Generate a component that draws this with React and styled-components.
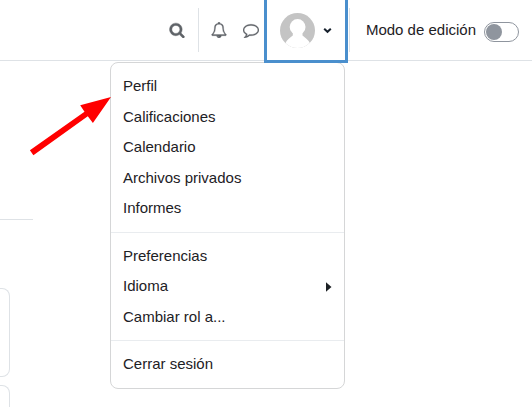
import React from 'react';
import styled, { createGlobalStyle } from 'styled-components';

const GlobalStyle = createGlobalStyle`
  * { box-sizing: border-box; }
  body {
    margin: 0;
    background: #fff;
    color: #1d2125;
    font: 15px/22.5px "Liberation Sans", Arial, sans-serif;
    overflow: hidden;
  }
`;

const Page = styled.div`
  position: relative;
  width: 532px;
  height: 407px;
  overflow: hidden;
`;

const Navbar = styled.header`
  display: flex;
  align-items: flex-start;
  justify-content: flex-end;
  height: 61px;
  padding-right: 13px;
  border-bottom: 1px solid #dee2e6;
`;

const NavIcon = styled.svg`
  flex: none;
  width: 16px;
  height: 16px;
  margin: 22px ${(p) => p.$after}px 0 0;
  fill: #5f6368;
  stroke: #5f6368;
  stroke-width: ${(p) => p.$weight || 36};
`;

const Divider = styled.div`
  flex: none;
  width: 1px;
  height: 44px;
  margin: 8px ${(p) => p.$after}px 0 0;
  background: #dee2e6;
`;

const UserButton = styled.button`
  flex: none;
  display: flex;
  align-items: flex-start;
  width: 84px;
  height: 63px;
  margin: 0 1px 0 0;
  padding: 13px 0 0 13px;
  border: solid #4a8fcd;
  border-width: 0 3px 3px;
  background: #fff;
  position: relative;
  z-index: 1;
`;

const Avatar = styled.svg`
  flex: none;
  width: 35px;
  height: 35px;
`;

const Chevron = styled.svg`
  flex: none;
  width: 9px;
  height: 7px;
  margin: 14px 0 0 7.500px;
`;

const EditMode = styled.label`
  display: flex;
  align-items: flex-start;
  gap: 8px;
  padding-top: 19px;
  white-space: nowrap;
`;

const Switch = styled.span`
  width: 35px;
  height: 20px;
  margin-top: 3px;
  padding: 1px;
  border: 1px solid #8f959e;
  border-radius: 10px;
`;

const Knob = styled.span`
  display: block;
  width: 16px;
  height: 16px;
  border-radius: 50%;
  background: #8f959e;
`;

const Sidebar = styled.aside`
  width: 33px;
  padding-top: 158px;
`;

const SideRule = styled.div`
  height: 1px;
  background: #dee2e6;
`;

const SideCard = styled.div`
  width: 10px;
  height: 89px;
  margin-top: ${(p) => p.$gap}px;
  border: 1px solid #dee2e6;
  border-left: 0;
  border-radius: 0 8px 8px 0;
`;

const Menu = styled.nav`
  position: absolute;
  left: 110px;
  top: 62px;
  width: 235px;
  padding: 8px 0;
  background: #fff;
  border: 1px solid #d5d6d7;
  border-radius: 8px;
`;

const MenuItem = styled.div`
  display: flex;
  align-items: center;
  justify-content: space-between;
  height: 30.5px;
  padding: 4px 12px;
`;

const MenuRule = styled.div`
  height: 1px;
  margin: 8px 0;
  background: #e9ecef;
`;

const Caret = styled.svg`
  width: 6px;
  height: 10px;
  margin-top: 2px;
  fill: #1d2125;
`;

const Arrow = styled.svg`
  position: absolute;
  left: 28px;
  top: 94px;
  width: 84px;
  height: 64px;
  fill: #f00;
`;

const searchPath =
  'M1216 832q0-185-131.5-316.5t-316.5-131.5-316.5 131.5-131.5 316.5 131.5 316.5 316.5 131.5 316.5-131.5 131.5-316.5zm512 832q0 52-38 90t-90 38q-54 0-90-38l-343-342q-179 124-399 124-143 0-273.5-55.5t-225-150-150-225-55.5-273.5 55.5-273.5 150-225 225-150 273.5-55.5 273.5 55.5 225 150 150 225 55.5 273.5q0 220-124 399l343 343q37 37 37 90z';
const bellPath =
  'M912 1696q0-16-16-16-59 0-101.5-42.5t-42.5-101.5q0-16-16-16t-16 16q0 73 51.5 124.5t124.5 51.5q16 0 16-16zm-666-288h1300q-266-300-266-832 0-51-24-105t-69-103-121.5-80.5-169.5-31.5-169.5 31.5-121.5 80.5-69 103-24 105q0 532-266 832zm1482 0q0 52-38 90t-90 38h-448q0 106-75 181t-181 75-181-75-75-181h-448q-52 0-90-38t-38-90q50-42 91-88t85-119.5 74.5-158.5 50-206 19.5-260q0-152 117-282.5t307-158.5q-8-19-8-39 0-40 28-68t68-28 68 28 28 68q0 20-8 39 190 28 307 158.5t117 282.5q0 139 19.5 260t50 206 74.5 158.5 85 119.5 91 88z';
const commentPath =
  'M896 384q-204 0-381.5 69.5t-282 187.5-104.5 255q0 112 71.5 213.5t201.5 175.5l87 50-27 96q-24 91-70 172 152-63 275-171l43-38 57 6q69 8 130 8 204 0 381.5-69.5t282-187.5 104.5-255-104.5-255-282-187.5-381.5-69.5zm896 512q0 174-120 321.5t-326 233-450 85.5q-70 0-145-8-198 175-460 242-49 14-114 22h-5q-15 0-27-10.5t-16-27.5v-1q-3-4-.5-12t2-10 4.5-9.5l6-9 7-8.5 8-9q7-8 31-34.5t34.5-38 31-39.5 32.5-51 27-59 26-76q-157-89-247.5-220t-90.5-281q0-174 120-321.5t326-233 450-85.5 450 85.5 326 233 120 321.5z';

const groups = [
  ['Perfil', 'Calificaciones', 'Calendario', 'Archivos privados', 'Informes'],
  ['Preferencias', 'Idioma', 'Cambiar rol a...'],
  ['Cerrar sesión'],
];

export default function App() {
  return (
    <Page>
      <GlobalStyle />
      <Navbar>
        <NavIcon viewBox="0 0 1792 1792" $after={13.5} $weight={50}><path d={searchPath} /></NavIcon>
        <Divider $after={12} />
        <NavIcon viewBox="0 0 1792 1792" $after={16}><path d={bellPath} /></NavIcon>
        <NavIcon viewBox="0 0 1792 1792" $after={5}><path d={commentPath} /></NavIcon>
        <UserButton aria-label="Menú de usuario">
          <Avatar viewBox="0 0 35 35">
            <clipPath id="avatarClip"><circle cx="17.5" cy="17.5" r="17.5" /></clipPath>
            <g clipPath="url(#avatarClip)">
              <rect width="35" height="35" fill="#c4c4c4" />
              <circle cx="17.6" cy="14" r="7.900" fill="#fff" />
              <path
                d="M12.800 19.500v3C10.500 24.500 7 26.500 5.200 30.500V35h25v-4.500c-2-4-5.500-6-7.700-8v-3z"
                fill="#fff"
              />
            </g>
          </Avatar>
          <Chevron viewBox="0 0 9 7">
            <path d="M1.200 1.700 4.500 4.800 7.800 1.700" fill="none" stroke="#17212d" strokeWidth="2" />
          </Chevron>
        </UserButton>
        <Divider $after={15.5} />
        <EditMode>
          Modo de edición
          <Switch><Knob /></Switch>
        </EditMode>
      </Navbar>
      <Sidebar>
        <SideRule />
        <SideCard $gap={68} />
        <SideCard $gap={8} />
      </Sidebar>
      <Menu>
        {groups.map((items, i) => (
          <React.Fragment key={items[0]}>
            {i > 0 && <MenuRule />}
            {items.map((label) => (
              <MenuItem key={label}>
                {label}
                {label === 'Idioma' && <Caret viewBox="0 0 6 10"><path d="M0 .3 5.500 5 0 9.700z" /></Caret>}
              </MenuItem>
            ))}
          </React.Fragment>
        ))}
      </Menu>
      <Arrow viewBox="28 94 84 64">
        <path d="M111 97 92.900 123 87.800 116.300 33.400 155.200 29.900 150.300 84.500 111.700 80.200 105.300z" />
      </Arrow>
    </Page>
  );
}
